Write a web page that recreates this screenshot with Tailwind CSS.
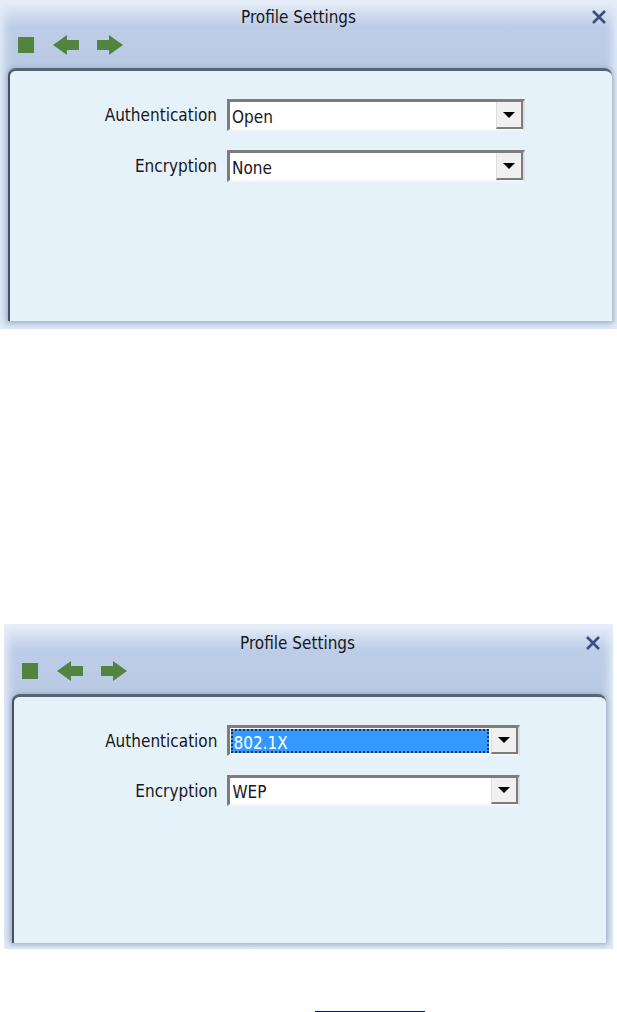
<!DOCTYPE html>
<html lang="en">
<head>
  <meta charset="UTF-8" />
  <meta name="viewport" content="width=device-width, initial-scale=1" />
  <title>Profile Settings</title>
  <script src="https://cdn.jsdelivr.net/npm/@tailwindcss/browser@4"></script>
</head>
<body class="bg-white text-[#17171c] text-[17px] leading-6 font-['DejaVu_Sans_Condensed','DejaVu_Sans',sans-serif]">

  <!-- Open / None -->
  <section class="bg-[#b9cae5] bg-linear-to-b from-[#e6eef8] via-[#bdcde7] via-8% to-[#b9cae5] to-20% shadow-[inset_0_0_8px_4px_#e4edf8] pl-2 pr-[5px] pb-2">
    <header>
      <div class="flex items-center h-[34px] pr-[3px]">
        <h1 class="flex-1 text-center">Profile Settings</h1>
        <button type="button" aria-label="Close" class="w-5 h-5 flex items-center justify-center">
          <svg class="w-4 h-4" viewBox="0 0 16 16" fill="none" stroke="#3a4c80" stroke-width="2.6"><path d="M2 2L14 14M14 2L2 14" /></svg>
        </button>
      </div>
      <nav class="flex items-center gap-4 h-[34px] pl-2 pb-3">
        <button type="button" aria-label="Stop" class="w-5">
          <svg class="w-5 h-5" viewBox="0 0 20 20" fill="#528440"><path d="M2 2H18V18H2Z" /></svg>
        </button>
        <button type="button" aria-label="Back">
          <svg class="w-7 h-5" viewBox="0 0 28 20" fill="#528440"><path d="M1 10L15 0V5H27V15H15V20Z" /></svg>
        </button>
        <button type="button" aria-label="Next">
          <svg class="w-7 h-5" viewBox="0 0 28 20" fill="#528440"><path d="M27 10L13 0V5H1V15H13V20Z" /></svg>
        </button>
      </nav>
    </header>
    <form class="bg-[#e6f2f9] border-t-3 border-l-2 border-t-[#566476] border-l-[#46525e] rounded-t-lg shadow-[0_0_4px_1px_#a2afc4] pt-7 pb-[139px] grid grid-cols-[207fr_298fr_77fr] gap-x-[10px] gap-y-[19px] items-center">
      <label for="auth1" class="text-right">Authentication</label>
      <div class="flex h-8 bg-white border-t-3 border-l-3 border-r-2 border-b-2 border-t-[#7d7d7d] border-l-[#7d7d7d] border-r-[#dedede] border-b-[#f5f5f5]">
        <select id="auth1" class="appearance-none flex-1 min-w-0 pl-0.5 pt-0.5 outline-none">
          <option>Open</option>
          <option>802.1X</option>
        </select>
        <span class="w-[27px] bg-[#f0f0f0] border-r-2 border-b-2 border-[#7d7d7d] border-l border-l-[#dedede] flex items-center justify-center">
          <svg class="w-3 h-2" viewBox="0 0 12 8" fill="#000"><path d="M0 1H12L6 7Z" /></svg>
        </span>
      </div>
      <label for="enc1" class="col-start-1 text-right">Encryption</label>
      <div class="flex h-8 bg-white border-t-3 border-l-3 border-r-2 border-b-2 border-t-[#7d7d7d] border-l-[#7d7d7d] border-r-[#dedede] border-b-[#f5f5f5]">
        <select id="enc1" class="appearance-none flex-1 min-w-0 pl-0.5 pt-0.5 outline-none">
          <option>None</option>
          <option>WEP</option>
        </select>
        <span class="w-[27px] bg-[#f0f0f0] border-r-2 border-b-2 border-[#7d7d7d] border-l border-l-[#dedede] flex items-center justify-center">
          <svg class="w-3 h-2" viewBox="0 0 12 8" fill="#000"><path d="M0 1H12L6 7Z" /></svg>
        </span>
      </div>
    </form>
  </section>

  <!-- 802.1X / WEP -->
  <section class="mt-[295px] mx-1 bg-[#b9cae5] bg-linear-to-b from-[#e6eef8] via-[#bdcde7] via-8% to-[#b9cae5] to-20% shadow-[inset_0_0_8px_4px_#e4edf8] pt-0.5 pl-2 pr-[7px] pb-[6px]">
    <header>
      <div class="flex items-center h-[34px] pr-[3px]">
        <h2 class="flex-1 text-center">Profile Settings</h2>
        <button type="button" aria-label="Close" class="w-5 h-5 flex items-center justify-center">
          <svg class="w-4 h-4" viewBox="0 0 16 16" fill="none" stroke="#3a4c80" stroke-width="2.6"><path d="M2 2L14 14M14 2L2 14" /></svg>
        </button>
      </div>
      <nav class="flex items-center gap-4 h-[34px] pl-2 pb-3">
        <button type="button" aria-label="Stop" class="w-5">
          <svg class="w-5 h-5" viewBox="0 0 20 20" fill="#528440"><path d="M2 2H18V18H2Z" /></svg>
        </button>
        <button type="button" aria-label="Back">
          <svg class="w-7 h-5" viewBox="0 0 28 20" fill="#528440"><path d="M1 10L15 0V5H27V15H15V20Z" /></svg>
        </button>
        <button type="button" aria-label="Next">
          <svg class="w-7 h-5" viewBox="0 0 28 20" fill="#528440"><path d="M27 10L13 0V5H1V15H13V20Z" /></svg>
        </button>
      </nav>
    </header>
    <form class="bg-[#e6f2f9] border-t-3 border-l-2 border-t-[#566476] border-l-[#46525e] rounded-t-lg shadow-[0_0_4px_1px_#a2afc4] pt-7 pb-[137px] grid grid-cols-[207fr_298fr_77fr] gap-x-[10px] gap-y-[19px] items-center">
      <label for="auth2" class="text-right">Authentication</label>
      <div class="flex h-[31px] bg-white border-t-3 border-l-3 border-r-2 border-b-2 border-t-[#7d7d7d] border-l-[#7d7d7d] border-r-[#dedede] border-b-[#f5f5f5]">
        <select id="auth2" class="appearance-none flex-1 min-w-0 m-px mr-0.5 bg-[#3399ff] text-white border-2 border-dotted border-[#17355c] outline-none">
          <option>802.1X</option>
          <option>Open</option>
        </select>
        <span class="w-[27px] bg-[#f0f0f0] border-r-2 border-b-2 border-[#7d7d7d] border-l border-l-[#dedede] flex items-center justify-center">
          <svg class="w-3 h-2" viewBox="0 0 12 8" fill="#000"><path d="M0 1H12L6 7Z" /></svg>
        </span>
      </div>
      <label for="enc2" class="col-start-1 text-right">Encryption</label>
      <div class="flex h-[31px] bg-white border-t-3 border-l-3 border-r-2 border-b-2 border-t-[#7d7d7d] border-l-[#7d7d7d] border-r-[#dedede] border-b-[#f5f5f5]">
        <select id="enc2" class="appearance-none flex-1 min-w-0 pl-0.5 pt-0.5 outline-none">
          <option>WEP</option>
          <option>None</option>
        </select>
        <span class="w-[27px] bg-[#f0f0f0] border-r-2 border-b-2 border-[#7d7d7d] border-l border-l-[#dedede] flex items-center justify-center">
          <svg class="w-3 h-2" viewBox="0 0 12 8" fill="#000"><path d="M0 1H12L6 7Z" /></svg>
        </span>
      </div>
    </form>
  </section>

  <hr class="mt-[62px] ml-[315px] w-[110px] border-t border-[#0000e6]" />

</body>
</html>
